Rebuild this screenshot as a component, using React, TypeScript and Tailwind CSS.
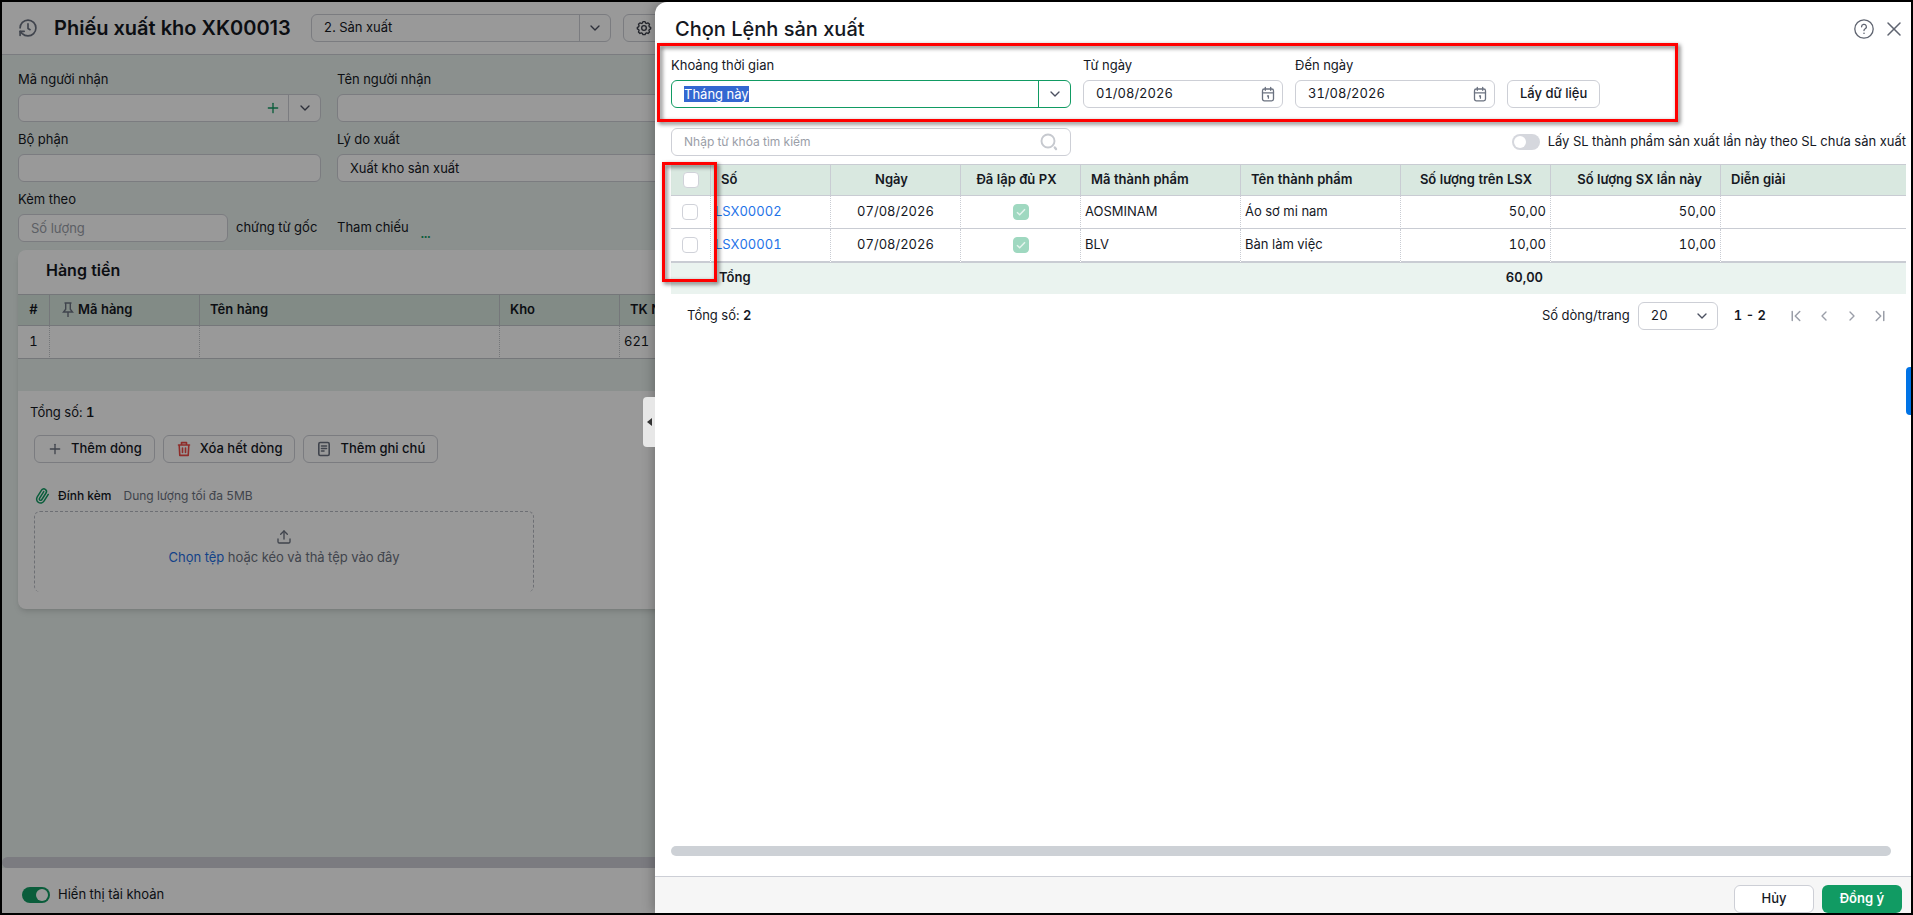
import React, { useEffect, useRef, useState } from 'react';
import {
    ChevronDown,
    ChevronFirst,
    ChevronLast,
    ChevronLeft,
    ChevronRight,
    Paperclip,
    Plus,
    Upload,
    X,
} from 'lucide-react';

interface ProductionOrder {
    id: string;
    date: string;
    issued: boolean;
    productCode: string;
    productName: string;
    quantity: string;
    currentQuantity: string;
}

const orders: ProductionOrder[] = [
    {
        id: 'LSX00002',
        date: '07/08/2026',
        issued: true,
        productCode: 'AOSMINAM',
        productName: 'Áo sơ mi nam',
        quantity: '50,00',
        currentQuantity: '50,00',
    },
    {
        id: 'LSX00001',
        date: '07/08/2026',
        issued: true,
        productCode: 'BLV',
        productName: 'Bàn làm việc',
        quantity: '10,00',
        currentQuantity: '10,00',
    },
];

const HistoryIcon = () => (
    <svg viewBox="0 0 24 24" className="size-5 text-[#6b7280]" fill="none" stroke="currentColor" strokeWidth="2" strokeLinecap="round" strokeLinejoin="round">
        <path d="M2.5 12a9.5 9.5 0 1 1 9.5 9.5 9.8 9.8 0 0 1-6.9-2.8L2.5 16" />
        <path d="M2.500 21v-5h5" />
        <path d="M12 7v5.5l2.5 1.500" />
    </svg>
);

const GearIcon = () => (
    <svg viewBox="0 0 24 24" className="size-4 text-[#3b3f4a]" fill="none" stroke="currentColor" strokeWidth="2" strokeLinejoin="round">
        <path d="M10.4 2.5h3.2l.8 2.1 1.6.6 2.1-.9 2.2 2.2-.9 2.1.6 1.6 2 .8v2.4l-2 1-.6 1.5.9 2.1-2.2 2.2-2.1-.9-1.6.6-.8 2.1h-3.2l-.8-2.1-1.6-.6-2.1.9-2.2-2.2.9-2.1-.6-1.5-2-1V11l2-.8.6-1.6-.9-2.1 2.2-2.2 2.1.9 1.6-.6z" />
        <circle cx="12" cy="12" r="3.5" />
    </svg>
);

const PinIcon = () => (
    <svg viewBox="0 0 12 16" className="h-4 w-3 text-[#6b7280]" fill="none" stroke="currentColor" strokeWidth="1.4">
        <path d="M2.5 1h7M3.7 1v6.2L1.5 10h9L8.3 7.2V1M6 10v5" />
    </svg>
);

const TrashIcon = () => (
    <svg viewBox="0 0 16 16" className="size-4 text-[#ef4a45]" fill="none" stroke="currentColor" strokeWidth="1.6" strokeLinecap="round" strokeLinejoin="round">
        <path d="M2.5 4h11M5.5 4V1.6h5V4M3.2 4l.6 10.4h8.4L12.8 4M6.5 7v4.500M9.500 7v4.500" />
    </svg>
);

const NoteIcon = () => (
    <svg viewBox="0 0 16 16" className="size-4 text-[#6b7280]" fill="none" stroke="currentColor" strokeWidth="1.6" strokeLinecap="round">
        <rect x="2.8" y="1.5" width="10.4" height="13" rx="1.5" />
        <path d="M5.5 5h5M5.5 7.500h5M5.500 10h2.500" />
    </svg>
);

const CalendarIcon = () => (
    <svg viewBox="0 0 16 16" className="size-4 text-[#6b7280]" fill="none" stroke="currentColor" strokeWidth="1.3" strokeLinecap="round">
        <rect x="2.5" y="3" width="11" height="11.800" rx="1.800" />
        <path d="M5.300 1.300v3M10.700 1.300v3M2.500 6.800h11M7.500 10h.9v2.200" />
    </svg>
);

const SearchIcon = () => (
    <svg viewBox="0 0 18 18" className="size-[18px] text-[#c6c9cf]" fill="none" stroke="currentColor" strokeWidth="1.9" strokeLinecap="round">
        <circle cx="8" cy="8" r="6.5" />
        <path d="M14.800 14.500l1.200 1.500" strokeWidth="2.400" />
    </svg>
);

const HelpIcon = () => (
    <svg viewBox="0 0 20 20" className="size-5 text-[#5f6470]" fill="none" stroke="currentColor" strokeWidth="1.3" strokeLinecap="round">
        <circle cx="10" cy="10" r="9.200" />
        <path d="M7.600 7.800a2.400 2.400 0 1 1 3.600 2c-.8.500-1.200.9-1.200 1.700" />
        <path d="M10 14.200v.1" strokeWidth="1.600" />
    </svg>
);

const CheckBox: React.FC<{ label: string; checked?: boolean; disabled?: boolean; onChange?: () => void }> = ({
    label,
    checked = false,
    disabled = false,
    onChange,
}) => (
    <span className="relative mx-auto block size-4">
        <input
            type="checkbox"
            aria-label={label}
            checked={checked}
            disabled={disabled}
            onChange={onChange}
            className="block size-4 appearance-none rounded border border-[#d0d2d9] bg-white checked:border-[#119b63] checked:bg-[#119b63] disabled:border-[#9fd8c0] disabled:bg-[#9fd8c0]"
        />
        {checked && (
            <svg viewBox="0 0 16 16" className="pointer-events-none absolute inset-0 size-4" fill="none" stroke="#e4f4ed" strokeWidth="1.5">
                <path d="M4 8.2l2.7 2.6L12 5.3" />
            </svg>
        )}
    </span>
);

const Toggle: React.FC<{ id: string; checked: boolean; onChange: () => void }> = ({ id, checked, onChange }) => (
    <input
        id={id}
        type="checkbox"
        role="switch"
        checked={checked}
        onChange={onChange}
        className="flex h-4 w-7 shrink-0 appearance-none items-center rounded-full bg-[#d5d7dd] px-0.5 before:size-3 before:rounded-full before:bg-white checked:justify-end checked:bg-[#119b63]"
    />
);

const Field: React.FC<{ id: string; label: string; children: React.ReactNode }> = ({ id, label, children }) => (
    <div className="flex flex-col gap-[5px]">
        <label htmlFor={id} className="leading-5">{label}</label>
        {children}
    </div>
);

const inputClass = 'h-7 w-full rounded-md border border-[#cdcfd6] bg-white px-3 outline-none placeholder:text-[#9a9ea8]';
const outlineButton = 'flex h-7 items-center justify-center rounded-md border border-[#cdcfd6] bg-white px-3';
const pageButton = 'flex size-7 items-center justify-center text-[#9a9ea8]';

const DateField: React.FC<{ id: string; label: string; value: string }> = ({ id, label, value }) => (
    <Field id={id} label={label}>
        <div className="flex h-7 w-[200px] items-center rounded-md border border-[#cdcfd6] bg-white pr-1.5 pl-3">
            <input id={id} defaultValue={value} className="min-w-0 flex-1 outline-none" />
            <CalendarIcon />
        </div>
    </Field>
);

const VoucherPage = () => {
    const [showAccounts, setShowAccounts] = useState(true);

    return (
        <div className="flex h-full flex-col bg-[#e8f0ed]">
            <header className="flex h-[53px] shrink-0 items-center border-b border-[#cdcfd6] bg-white pl-4">
                <button aria-label="Lịch sử" className="mr-4"><HistoryIcon /></button>
                <h1 className="mr-5 text-xl font-semibold whitespace-nowrap proportional-nums">Phiếu xuất kho XK00013</h1>
                <div className="relative mr-3 w-[300px] shrink-0">
                    <select aria-label="Loại phiếu" className={`${inputClass} appearance-none`}>
                        <option>2. Sản xuất</option>
                    </select>
                    <span className="pointer-events-none absolute inset-y-0 right-0 flex w-8 items-center justify-center border-l border-[#cdcfd6]">
                        <ChevronDown className="size-4 text-[#4b5060]" />
                    </span>
                </div>
                <button aria-label="Thiết lập" className={outlineButton}><GearIcon /></button>
            </header>

            <main className="flex-1 overflow-hidden pt-3.5 pl-4">
                <form className="grid grid-cols-[303px_1fr] gap-x-4 gap-y-[7px]">
                    <Field id="receiver-code" label="Mã người nhận">
                        <div className="flex h-7 items-center rounded-md border border-[#cdcfd6] bg-white">
                            <input id="receiver-code" className="min-w-0 flex-1 px-3 outline-none" />
                            <button type="button" aria-label="Thêm người nhận" className="px-[7px]"><Plus className="size-4 text-[#119b63]" /></button>
                            <button type="button" aria-label="Chọn người nhận" className="flex h-full w-8 items-center justify-center border-l border-[#cdcfd6]">
                                <ChevronDown className="size-4 text-[#4b5060]" />
                            </button>
                        </div>
                    </Field>
                    <Field id="receiver-name" label="Tên người nhận">
                        <input id="receiver-name" className={inputClass} />
                    </Field>
                    <Field id="department" label="Bộ phận">
                        <input id="department" className={inputClass} />
                    </Field>
                    <Field id="reason" label="Lý do xuất">
                        <input id="reason" className={inputClass} defaultValue="Xuất kho sản xuất" />
                    </Field>
                    <Field id="attached" label="Kèm theo">
                        <div className="flex items-center gap-2">
                            <div className="w-[210px]">
                                <input id="attached" className={inputClass} placeholder="Số lượng" />
                            </div>
                            <span>chứng từ gốc</span>
                        </div>
                    </Field>
                    <div className="flex h-7 items-center gap-3 self-end">
                        <span>Tham chiếu</span>
                        <button type="button" className="self-end text-xs font-bold text-[#119b63]">...</button>
                    </div>
                </form>

                <section className="mt-2 overflow-hidden rounded-l-lg bg-white shadow-md">
                    <h2 className="pt-2 pb-3 pl-7 text-base font-semibold">Hàng tiền</h2>
                    <table className="w-full table-fixed border-separate border-spacing-0">
                        <thead>
                            <tr className="h-8 bg-[#d9e8e0] text-left">
                                <th className="w-8 border-y border-r border-[#c3c6cc] text-center font-semibold">#</th>
                                <th className="w-[150px] border-y border-r border-[#c3c6cc] pl-3 font-semibold">
                                    <span className="flex items-center gap-1"><PinIcon />Mã hàng</span>
                                </th>
                                <th className="w-[300px] border-y border-r border-[#c3c6cc] pl-2.5 font-semibold">Tên hàng</th>
                                <th className="w-[120px] border-y border-r border-[#c3c6cc] pl-2.5 font-semibold">Kho</th>
                                <th className="border-y border-[#c3c6cc] pl-2.5 font-semibold">TK Nợ</th>
                            </tr>
                        </thead>
                        <tbody>
                            <tr className="h-[33px]">
                                <td className="border-r border-b border-[#c3c6cc] text-center [border-right-style:dotted]">1</td>
                                <td className="border-r border-b border-[#c3c6cc] [border-right-style:dotted]" />
                                <td className="border-r border-b border-[#c3c6cc] [border-right-style:dotted]" />
                                <td className="border-r border-b border-[#c3c6cc] [border-right-style:dotted]" />
                                <td className="border-b border-[#c3c6cc] pl-1">621</td>
                            </tr>
                        </tbody>
                    </table>
                    <div className="h-8 bg-[#e8f0ed]" />
                    <div className="px-4 pt-[11px] pb-[17px]">
                        <p className="-ml-1 leading-5">Tổng số: <b className="font-semibold">1</b></p>
                        <div className="mt-[13px] flex gap-2 font-medium">
                            <button className={`${outlineButton} gap-2`}><Plus className="size-4 text-[#6b7280]" />Thêm dòng</button>
                            <button className={`${outlineButton} gap-2`}><TrashIcon />Xóa hết dòng</button>
                            <button className={`${outlineButton} gap-2`}><NoteIcon />Thêm ghi chú</button>
                        </div>
                        <div className="mt-[23px] flex h-5 items-center text-xs">
                            <Paperclip className="mr-2 size-4 -rotate-12 text-[#119b63]" strokeWidth={2.25} />
                            <span className="mr-3 font-medium">Đính kèm</span>
                            <span className="text-[#6b7280]">Dung lượng tối đa 5MB</span>
                        </div>
                        <div className="mt-[5px] flex h-[81px] w-[500px] flex-col items-center gap-0.5 rounded-md border border-b-0 border-dashed border-[#b6b9c1] pt-[17px]">
                            <Upload className="size-4 text-[#6b7280]" />
                            <p className="leading-5 text-[#6b7280]">
                                <a href="#files" className="text-[#1f6fe5]">Chọn tệp</a> hoặc kéo và thả tệp vào đây
                            </p>
                        </div>
                    </div>
                </section>
            </main>

            <div className="h-[11px] shrink-0 rounded-full bg-[#cdced6]" />
            <footer className="flex h-[45px] shrink-0 items-center gap-2 bg-white pt-2 pl-5">
                <Toggle id="show-accounts" checked={showAccounts} onChange={() => setShowAccounts(!showAccounts)} />
                <label htmlFor="show-accounts">Hiển thị tài khoản</label>
            </footer>
        </div>
    );
};

const headCell = 'border-y border-r border-[#c9ccd3] px-2.5 text-left font-semibold last:border-r-0';
const bodyCell = 'border-r border-b border-[#c9ccd3] px-1 [border-right-style:dotted] last:border-r-0 group-last:border-b-2';

const OrderTable = () => {
    const [selected, setSelected] = useState<string[]>([]);
    const allSelected = selected.length === orders.length;

    const toggleOrder = (id: string) => {
        setSelected(selected.includes(id) ? selected.filter((item) => item !== id) : [...selected, id]);
    };

    return (
        <table className="w-full table-fixed border-separate border-spacing-0">
            <colgroup>
                <col className="w-10" />
                <col className="w-[120px]" />
                <col className="w-[130px]" />
                <col className="w-[120px]" />
                <col className="w-[160px]" />
                <col className="w-[160px]" />
                <col className="w-[150px]" />
                <col className="w-[170px]" />
                <col />
            </colgroup>
            <thead>
                <tr className="h-8 bg-[#d9e8e0]">
                    <th className="border-y border-r border-[#c9ccd3]">
                        <CheckBox label="Chọn tất cả" checked={allSelected} onChange={() => setSelected(allSelected ? [] : orders.map((o) => o.id))} />
                    </th>
                    <th className={headCell}>Số</th>
                    <th className="border-y border-r border-[#c9ccd3] pr-2 text-center font-semibold">Ngày</th>
                    <th className="border-y border-r border-[#c9ccd3] pr-2 text-center font-semibold">Đã lập đủ PX</th>
                    <th className={headCell}>Mã thành phẩm</th>
                    <th className={headCell}>Tên thành phẩm</th>
                    <th className="border-y border-r border-[#c9ccd3] pr-[18px] text-right font-semibold">Số lượng trên LSX</th>
                    <th className="border-y border-r border-[#c9ccd3] pr-[18px] text-right font-semibold">Số lượng SX lần này</th>
                    <th className={headCell}>Diễn giải</th>
                </tr>
            </thead>
            <tbody>
                {orders.map((order) => (
                    <tr key={order.id} className="group h-[33px] last:h-[34px]">
                        <td className={`${bodyCell} pr-1.5`}>
                            <CheckBox label={order.id} checked={selected.includes(order.id)} onChange={() => toggleOrder(order.id)} />
                        </td>
                        <td className={bodyCell}><a href={`#${order.id}`} className="text-[#1f74e8]">{order.id}</a></td>
                        <td className={`${bodyCell} text-center`}>{order.date}</td>
                        <td className={bodyCell}><CheckBox label="Đã lập đủ PX" checked={order.issued} disabled /></td>
                        <td className={bodyCell}>{order.productCode}</td>
                        <td className={bodyCell}>{order.productName}</td>
                        <td className={`${bodyCell} text-right`}>{order.quantity}</td>
                        <td className={`${bodyCell} text-right`}>{order.currentQuantity}</td>
                        <td className={bodyCell} />
                    </tr>
                ))}
            </tbody>
            <tfoot>
                <tr className="h-[31px] bg-[#eaf3ef] font-semibold">
                    <td />
                    <td className="px-2 pb-0.5">Tổng</td>
                    <td colSpan={4} />
                    <td className="px-2 pb-0.5 text-right">60,00</td>
                    <td colSpan={2} />
                </tr>
            </tfoot>
        </table>
    );
};

const OrderDrawer = () => {
    const periodRef = useRef<HTMLInputElement>(null);
    const [useRemaining, setUseRemaining] = useState(false);

    useEffect(() => {
        periodRef.current?.focus();
        periodRef.current?.select();
    }, []);

    return (
        <aside className="absolute inset-y-0 right-0 left-[653px] flex flex-col rounded-tl-xl bg-white shadow-[-2px_0_12px_rgba(0,0,0,0.25)]">
            <button aria-label="Mở rộng" className="absolute top-[395px] -left-3 flex h-[50px] w-3 items-center justify-center rounded-l-sm bg-[#e7e7e7]">
                <svg viewBox="0 0 5 8" className="h-2 w-[5px]" fill="#333"><path d="M5 0v8L0 4z" /></svg>
            </button>

            <div className="flex h-[53px] shrink-0 items-center pr-[5px] pl-5">
                <h2 className="flex-1 text-xl font-medium">Chọn Lệnh sản xuất</h2>
                <button aria-label="Trợ giúp" className="mr-2"><HelpIcon /></button>
                <button aria-label="Đóng"><X className="size-6 text-[#5f6470]" strokeWidth={1.5} /></button>
            </div>

            <div className="flex flex-1 flex-col pr-[5px] pl-4">
                <div className="flex items-end gap-3">
                    <Field id="period" label="Khoảng thời gian">
                        <div className="flex h-7 w-[400px] items-center rounded-md border border-[#119b63] bg-white">
                            <input
                                id="period"
                                ref={periodRef}
                                defaultValue="Tháng này"
                                className="h-4 min-w-0 flex-1 px-3 leading-4 outline-none selection:bg-[#3367d1] selection:text-white"
                            />
                            <button aria-label="Chọn khoảng thời gian" className="flex h-full w-8 items-center justify-center border-l border-[#119b63]">
                                <ChevronDown className="size-4 text-[#4b5060]" />
                            </button>
                        </div>
                    </Field>
                    <DateField id="from-date" label="Từ ngày" value="01/08/2026" />
                    <DateField id="to-date" label="Đến ngày" value="31/08/2026" />
                    <button className={`${outlineButton} font-medium`}>Lấy dữ liệu</button>
                </div>

                <div className="mt-5 mb-2 flex items-center justify-between">
                    <div className="flex h-7 w-[400px] items-center rounded-md border border-[#cdcfd6] px-3">
                        <input aria-label="Tìm kiếm" placeholder="Nhập từ khóa tìm kiếm" className="min-w-0 flex-1 text-xs outline-none placeholder:text-[#9a9ea8]" />
                        <SearchIcon />
                    </div>
                    <div className="flex items-center gap-2">
                        <Toggle id="use-remaining" checked={useRemaining} onChange={() => setUseRemaining(!useRemaining)} />
                        <label htmlFor="use-remaining">Lấy SL thành phẩm sản xuất lần này theo SL chưa sản xuất</label>
                    </div>
                </div>

                <OrderTable />

                <div className="mt-2 flex items-center pr-3 pl-4">
                    <p className="flex-1">Tổng số: <b className="font-semibold">2</b></p>
                    <label htmlFor="page-size" className="mr-2">Số dòng/trang</label>
                    <div className="relative mr-4 w-20">
                        <select id="page-size" className={`${inputClass} appearance-none`}>
                            <option>20</option>
                        </select>
                        <ChevronDown className="pointer-events-none absolute top-1.5 right-2 size-4 text-[#4b5060]" />
                    </div>
                    <span className="mr-4 font-semibold">1 - 2</span>
                    <button aria-label="Trang đầu" className={pageButton}><ChevronFirst className="size-[18px]" /></button>
                    <button aria-label="Trang trước" className={pageButton}><ChevronLeft className="size-4" /></button>
                    <button aria-label="Trang sau" className={pageButton}><ChevronRight className="size-4" /></button>
                    <button aria-label="Trang cuối" className={pageButton}><ChevronLast className="size-[18px]" /></button>
                </div>

                <div className="mt-auto mr-[15px] mb-5 h-2.5 rounded-full bg-[#cdd1d6]" />
            </div>

            <div className="flex shrink-0 justify-end gap-2 border-t border-[#cdcfd6] bg-[#f6f6f6] pt-2 pr-[9px] font-medium">
                <button className={`${outlineButton} w-20`}>Hủy</button>
                <button className="h-7 w-20 rounded-md bg-[#119b63] font-semibold text-white">Đồng ý</button>
            </div>

            {/* highlighted areas of the guide */}
            <div className="pointer-events-none absolute top-[41px] left-0.5 h-[79px] w-[1021px] border-3 border-[#ff0000] drop-shadow-[2px_2px_2px_rgba(0,0,0,0.6)]" />
            <div className="pointer-events-none absolute top-[160px] left-[7px] h-[120px] w-[55px] border-3 border-[#ff0000] drop-shadow-[2px_2px_2px_rgba(0,0,0,0.6)]" />

            <button aria-label="Hỗ trợ" className="absolute top-[365px] right-0 h-12 w-[5px] rounded-l-sm bg-[#0073e6]" />
        </aside>
    );
};

const App = () => (
    <div className="relative h-screen overflow-hidden border-2 border-black text-[13px] text-[#15181f] tabular-nums [font-family:Inter,'Noto_Sans',sans-serif]">
        <VoucherPage />
        <div className="absolute inset-0 bg-black/40" />
        <OrderDrawer />
    </div>
);

export default App;
